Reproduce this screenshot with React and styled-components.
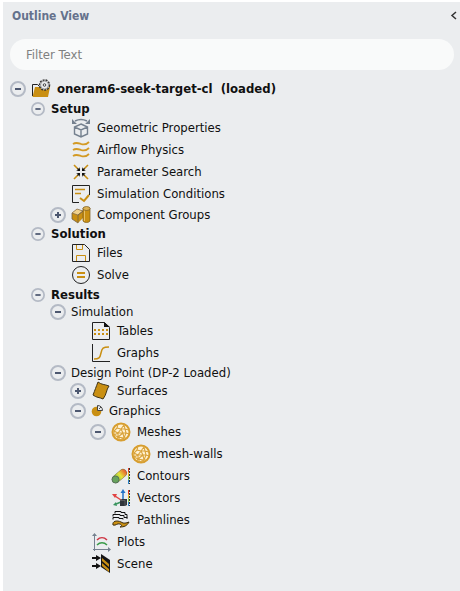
// libraries
import { useState } from 'react';
import styled, { createGlobalStyle, ThemeProvider } from 'styled-components';

const theme = {
  colors: {
    panel: '#ebedef',
    field: '#f9fafa',
    title: '#65728c',
    text: '#101010',
    ring: '#b4bac5',
    sign: '#4d5870',
    gold: '#c98f12',
    steel: '#75818f',
  },
};

const { gold, steel } = theme.colors;

const GlobalStyle = createGlobalStyle`
  * {
    box-sizing: border-box;
  }

  body {
    background: #fff;
    margin: 0;
  }

  button,
  input {
    font: inherit;
  }
`;

const Panel = styled.aside`
  background: ${({ theme }) => theme.colors.panel};
  color: ${({ theme }) => theme.colors.text};
  font-family: 'DejaVu Sans Condensed', 'Noto Sans', sans-serif;
  font-size: 13px;
  line-height: 16px;
  margin: 2px 0 0 3px;
  min-height: calc(100vh - 2px);
  padding: 4px 3px 0 7px;
`;

const Header = styled.header`
  align-items: center;
  display: flex;
  height: 20px;
  justify-content: space-between;
  padding-left: 2px;
`;

const Title = styled.h1`
  color: ${({ theme }) => theme.colors.title};
  font-size: 12px;
  font-weight: 700;
  margin: 0;
`;

const CollapseButton = styled.button`
  background: none;
  border: 0;
  cursor: pointer;
  display: flex;
  padding: 0;
`;

const Content = styled.div`
  padding: 13px 3px 0 0;
`;

const FilterInput = styled.input`
  background: ${({ theme }) => theme.colors.field};
  border: 0;
  border-radius: 16px;
  color: inherit;
  display: block;
  height: 31px;
  margin-bottom: 8px;
  padding: 0 16px;
  width: 100%;

  &::placeholder {
    color: #808080;
    opacity: 1;
  }
`;

const List = styled.ul`
  list-style: none;
  margin: 0;
  padding: 0 0 0 ${({ $nested }) => ($nested ? '20px' : '0')};
`;

const rowHeights = { group: '17px', compact: '20px', regular: '22px' };

const Row = styled.div`
  align-items: center;
  display: flex;
  height: ${({ $size }) => rowHeights[$size]};
  white-space: nowrap;
`;

const ToggleSlot = styled.span`
  display: flex;
  flex: none;
  justify-content: center;
  margin-right: 5px;
  width: 16px;
`;

const Toggle = styled.button`
  background: none;
  border: 0;
  cursor: pointer;
  display: flex;
  padding: 0;

  svg {
    height: ${({ $small }) => ($small ? '14px' : '16px')};
    width: ${({ $small }) => ($small ? '14px' : '16px')};
  }
`;

const IconSlot = styled.span`
  display: flex;
  flex: none;
  margin-right: 6px;
  width: ${({ $small }) => ($small ? '12px' : '20px')};
`;

const Label = styled.span`
  font-weight: ${({ $bold }) => ($bold ? 700 : 400)};
  white-space: pre;
`;

const Svg = ({ size = 20, children }) => (
  <svg width={size} height={size} viewBox={`0 0 ${size} ${size}`} fill="none" aria-hidden="true">
    {children}
  </svg>
);

const Spectrum = () => (
  <>
    <path d="M17 2h1v4h-1z" fill="#e23b24" />
    <path d="M17 6h1v4h-1z" fill="#f0b62b" />
    <path d="M17 10h1v4h-1z" fill="#8ccf45" />
    <path d="M17 14h1v4h-1z" fill="#2d86c8" />
    <path d="M18.500 2v16" stroke="#333" strokeDasharray="2 1" />
  </>
);

const icons = {
  project: (
    <Svg>
      <path d="M1.500 17V5.500h5l2 2" stroke="#222" />
      <path d="M4 8h15l-2 10H1.500z" fill={gold} />
      <circle cx="13.500" cy="6" r="5" fill="#ebedef" stroke="#333" strokeWidth="1.500" strokeDasharray="2 1" />
      <circle cx="13.500" cy="6" r="4" fill="#ebedef" stroke="#666" strokeWidth=".6" />
      <circle cx="13.500" cy="6" r="1.300" stroke="#444" />
    </Svg>
  ),
  geometry: (
    <Svg>
      <path d="M4 3c4-2 8-2 12 0" stroke={steel} strokeWidth="1.500" />
      <path d="M1 1v5h5zM19 1v5h-5z" fill={steel} />
      <path d="M10 6l6.500 3v7L10 19l-6.500-3V9zM3.500 9l6.500 3 6.500-3M10 12v7" stroke={steel} strokeWidth="1.400" />
    </Svg>
  ),
  airflow: (
    <Svg>
      {[4, 10, 16].map((y) => (
        <path
          key={y}
          d={`M2 ${y}C5 ${y - 2} 7 ${y - 1} 10 ${y}S15 ${y + 1} 18 ${y - 2}`}
          stroke="#d39a24"
          strokeWidth="1.800"
        />
      ))}
    </Svg>
  ),
  search: (
    <Svg>
      <path d="M3 3l4 4M17 3l-4 4M3 17l4-4M17 17l-4-4" stroke={gold} strokeWidth="1.600" />
      <path d="M9 5v4H5l2-1-1-1 1-1 1 1zM11 5v4h4l-2-1 1-1-1-1-1 1zM9 15v-4H5l2 1-1 1 1 1 1-1zM11 15v-4h4l-2 1 1 1-1 1-1-1z" fill="#111" />
    </Svg>
  ),
  conditions: (
    <Svg>
      <path d="M8 18.500H1.500v-17h17V11" stroke="#222" />
      <path d="M4 5.500h10M4 9.500h6" stroke={gold} strokeWidth="1.500" />
      <path d="M9 14l4 3 5-6" stroke={gold} strokeWidth="2" />
    </Svg>
  ),
  components: (
    <Svg>
      <path d="M1 8l5-4 6 2v7l-5 5-6-4z" fill={gold} />
      <path d="M1 8l5-4 6 2-5 4z" fill="#f1d28d" stroke="#80684a" strokeWidth=".7" />
      <path d="M1 8v6l6 4v-8l5-4" stroke="#756247" strokeWidth=".8" />
      <path d="M12 3v13c1.500 2 5.500 2 7 0V3z" fill={gold} stroke="#795a1d" strokeWidth=".7" />
      <path d="M13.500 5v11" stroke="#e7bf65" />
      <ellipse cx="15.500" cy="3.500" rx="3.500" ry="2" fill="#ddb253" stroke="#795a1d" strokeWidth=".7" />
    </Svg>
  ),
  files: (
    <Svg>
      <path d="M1.500 1.500h12l5 5v12h-17z" stroke="#222" />
      <path d="M5.500 2v4.500h6V2M5.500 18v-5.500h9V18" stroke={gold} />
    </Svg>
  ),
  solve: (
    <Svg>
      <circle cx="10" cy="10" r="8.500" stroke="#222" />
      <path d="M6 8h8M6 12h8" stroke={gold} strokeWidth="2" />
    </Svg>
  ),
  tables: (
    <Svg>
      <path d="M1.500 1.500h12l5 5v12h-17z" stroke="#222" />
      <path d="M13 1l6 5h-6z" fill="#111" />
      <path d="M3 9h14M3 13h14" stroke={gold} strokeWidth="2" strokeDasharray="2 2" />
    </Svg>
  ),
  graphs: (
    <Svg>
      <path d="M1.500 1v17.500H19" stroke="#222" />
      <path d="M3 16c5 0 6-1 7-6s2-6 8-6" stroke={gold} strokeWidth="1.500" />
    </Svg>
  ),
  surfaces: (
    <Svg>
      <path d="M7 1c4 3 6 2 11 4-3 4-2 8-6 13-4-2-6-1-10-4 2-5 3-8 5-13z" fill={gold} stroke="#403316" />
    </Svg>
  ),
  graphics: (
    <Svg size={12}>
      <circle cx="5.500" cy="6.500" r="4.800" fill={gold} />
      <path d="M6.500 5.500v-5c3 0 5 2 5 5z" fill="#ebedef" stroke="#444" />
      <path d="M8 4l2-2" stroke="#555" />
    </Svg>
  ),
  mesh: (
    <Svg>
      <circle cx="10" cy="10" r="8.500" fill="#fff2d4" stroke="#d79d2d" strokeWidth="2" />
      <path
        d="M7 2l-1 4 4 1 3-4 1 4 4 1M10 7l4 0 1 4 3 1M6 6l-3 3 4 2 3-4 2 4 3 0-2 5-1-5-5 0 0 4 5 1 0 3M3 9v4l4 2-1 2M7 11l-4 2M7 15l5-4M7 15l2 3 4-2 3 0"
        stroke="#d9a33c"
        strokeWidth="1.100"
      />
    </Svg>
  ),
  contours: (
    <Svg>
      <defs>
        <linearGradient id="contour-fill" x1="3" y1="14" x2="15" y2="4" gradientUnits="userSpaceOnUse">
          <stop offset="0" stopColor="#58ae47" />
          <stop offset=".5" stopColor="#e4e53a" />
          <stop offset="1" stopColor="#e84732" />
        </linearGradient>
      </defs>
      <path d="M5 13l7-6" stroke="#7a7442" strokeWidth="8" strokeLinecap="round" />
      <path d="M5 13l7-6" stroke="url(#contour-fill)" strokeWidth="7" strokeLinecap="round" />
      <circle cx="4.500" cy="13.500" r="3.500" fill="#67a35c" stroke="#58715a" />
      <Spectrum />
    </Svg>
  ),
  vectors: (
    <Svg>
      <path d="M12 12V4" stroke="#2372c8" strokeWidth="1.500" />
      <path d="M12 1l2.500 4h-5z" fill="#2372c8" />
      <path d="M10 12L4 8" stroke="#e14343" strokeWidth="1.500" />
      <path d="M1 6l5 0-2 4z" fill="#e14343" />
      <path d="M10 14l-5 2" stroke="#39945e" strokeWidth="1.500" />
      <path d="M2 17l3-3 1 4z" fill="#39945e" />
      <path d="M9 12l2-1h5v6l-2 1H9z" fill="#30363b" />
      <path d="M9 12.500h5V18" stroke="#777" strokeWidth=".6" />
      <Spectrum />
    </Svg>
  ),
  pathlines: (
    <Svg>
      <path d="M4 3.500V1.500h6v1h4v2h2v4M2 6.500v-2h7v1h4v2h3v1M2 9.500v-2h6v1h4v1" stroke="#111" />
      <path d="M2 15c-1-4 4-5 8-3 3 2 5 1 8 0-2 4-5 5-9 5 2-1 2-2 0-3-3-1-4 2-7 1z" fill={gold} stroke="#3b2c10" />
    </Svg>
  ),
  plots: (
    <Svg>
      <path d="M3.500 19V3M2 17.500h15" stroke={steel} />
      <path d="M3.500 1L6 4H1zM20 17.500l-3 2.500v-5z" fill={steel} />
      <path d="M6 8c3-3 7-3 10 0" stroke="#ce3442" strokeWidth="1.500" />
      <path d="M6 13c3-3 7-3 10 0" stroke="#3a9b49" strokeWidth="1.500" />
    </Svg>
  ),
  scene: (
    <Svg>
      <path d="M10 0l9 6v13l-9-6z" fill="#151515" />
      <path d="M11 4l7 6v3l-7-6zM11 9l7 6v3l-7-6z" fill={gold} />
      <path d="M1 4h5M1 12h5" stroke="#111" strokeWidth="2" />
      <path d="M5 1l5 3-5 3zM5 9l5 3-5 3z" fill="#111" />
    </Svg>
  ),
};

const outline = {
  label: 'oneram6-seek-target-cl  (loaded)',
  icon: 'project',
  bold: true,
  children: [
    {
      label: 'Setup',
      size: 'group',
      bold: true,
      children: [
        { label: 'Geometric Properties', icon: 'geometry' },
        { label: 'Airflow Physics', icon: 'airflow' },
        { label: 'Parameter Search', icon: 'search' },
        { label: 'Simulation Conditions', icon: 'conditions' },
        { label: 'Component Groups', icon: 'components', size: 'compact', collapsed: true },
      ],
    },
    {
      label: 'Solution',
      size: 'group',
      bold: true,
      children: [
        { label: 'Files', icon: 'files' },
        { label: 'Solve', icon: 'solve' },
      ],
    },
    {
      label: 'Results',
      size: 'group',
      bold: true,
      children: [
        {
          label: 'Simulation',
          size: 'group',
          children: [
            { label: 'Tables', icon: 'tables' },
            { label: 'Graphs', icon: 'graphs' },
          ],
        },
        {
          label: 'Design Point (DP-2 Loaded)',
          size: 'group',
          children: [
            { label: 'Surfaces', icon: 'surfaces', size: 'compact', collapsed: true },
            {
              label: 'Graphics',
              icon: 'graphics',
              size: 'compact',
              children: [
                { label: 'Meshes', icon: 'mesh', children: [{ label: 'mesh-walls', icon: 'mesh' }] },
                { label: 'Contours', icon: 'contours' },
                { label: 'Vectors', icon: 'vectors' },
                { label: 'Pathlines', icon: 'pathlines' },
              ],
            },
            { label: 'Plots', icon: 'plots' },
            { label: 'Scene', icon: 'scene' },
          ],
        },
      ],
    },
  ],
};

const TreeItem = ({ node }) => {
  const { label, icon, bold, size = 'regular', collapsed = false, children } = node;
  const [open, setOpen] = useState(!collapsed);
  const expandable = collapsed || Boolean(children);

  return (
    <li>
      <Row $size={size}>
        <ToggleSlot>
          {expandable && (
            <Toggle
              type="button"
              $small={bold && !icon}
              aria-expanded={open}
              aria-label={label}
              onClick={() => setOpen(!open)}
            >
              <svg viewBox="0 0 16 16" fill="none" aria-hidden="true">
                <circle cx="8" cy="8" r="7" stroke={theme.colors.ring} strokeWidth="2" />
                <path d={open ? 'M5 8h6' : 'M5 8h6M8 5v6'} stroke={theme.colors.sign} strokeWidth="2" />
              </svg>
            </Toggle>
          )}
        </ToggleSlot>
        {icon && <IconSlot $small={icon === 'graphics'}>{icons[icon]}</IconSlot>}
        <Label $bold={bold}>{label}</Label>
      </Row>
      {open && children && (
        <List $nested>
          {children.map((child) => (
            <TreeItem key={child.label} node={child} />
          ))}
        </List>
      )}
    </li>
  );
};

const App = () => {
  const [filter, setFilter] = useState('');

  return (
    <ThemeProvider theme={theme}>
      <GlobalStyle />
      <Panel>
        <Header>
          <Title>Outline View</Title>
          <CollapseButton type="button" aria-label="Collapse panel">
            <svg width="8" height="10" viewBox="0 0 8 10" fill="none" aria-hidden="true">
              <path d="M7 1L3 4.500 7 8" stroke="#333" strokeWidth="1.500" />
            </svg>
          </CollapseButton>
        </Header>
        <Content>
          <FilterInput
            type="text"
            aria-label="Filter Text"
            placeholder="Filter Text"
            value={filter}
            onChange={({ target }) => setFilter(target.value)}
          />
          <List>
            <TreeItem node={outline} />
          </List>
        </Content>
      </Panel>
    </ThemeProvider>
  );
};

export default App;
